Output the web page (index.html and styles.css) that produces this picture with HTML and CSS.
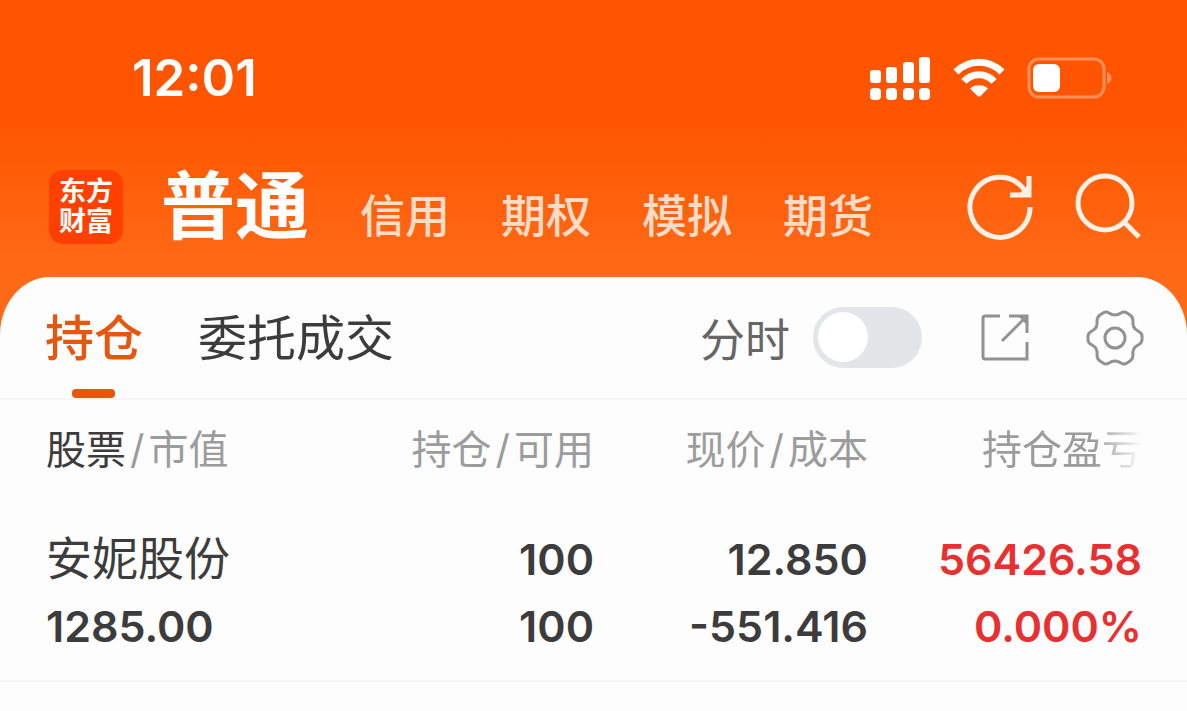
FILE: index.html
```html
<!DOCTYPE html>
<html lang="zh-CN">
<head>
  <meta charset="UTF-8">
  <meta name="viewport" content="width=device-width, initial-scale=1">
  <title>持仓</title>
  <link rel="stylesheet" href="styles.css">
</head>
<body>
  <header class="header">
    <div class="status-bar">
      <time class="clock">12:01</time>
      <div class="status-icons">
        <svg class="signal" width="62" height="44" viewBox="0 0 62 44" fill="#fff" aria-hidden="true">
          <rect x="1" y="14" width="11" height="13" rx="3"/>
          <rect x="17" y="11" width="11" height="16" rx="3"/>
          <rect x="34" y="6" width="11" height="21" rx="3"/>
          <rect x="50" y="1" width="11" height="26" rx="3"/>
          <rect x="1" y="32" width="11" height="12" rx="4"/>
          <rect x="17" y="32" width="11" height="12" rx="4"/>
          <rect x="34" y="32" width="11" height="12" rx="4"/>
          <rect x="50" y="32" width="11" height="12" rx="4"/>
        </svg>
        <svg class="wifi" width="52" height="40" viewBox="0 0 52 40" aria-hidden="true">
          <path d="M3 14C16 1 36 1 49 14" fill="none" stroke="#fff" stroke-width="7"/>
          <path d="M11 23.500C19 14.500 33 14.500 41 23.500" fill="none" stroke="#fff" stroke-width="7"/>
          <path d="M17 30.500C21 26 31 26 35 30.500L27.500 38Q26 39.500 24.500 38Z" fill="#fff"/>
        </svg>
        <svg class="battery" width="86" height="42" viewBox="0 0 86 42" aria-hidden="true">
          <rect x="2" y="2" width="75" height="38" rx="10" fill="none" stroke="#ff9059" stroke-width="3"/>
          <path d="M80 15C86 18 86 24 80 27Z" fill="#ff9059"/>
          <rect x="6" y="7" width="27" height="28" rx="6" fill="#fff"/>
        </svg>
      </div>
    </div>
    <div class="top-bar">
      <a class="logo" href="#"><span>东方</span><span>财富</span></a>
      <nav class="accounts">
        <a class="active" href="#">普通</a>
        <a href="#">信用</a>
        <a href="#">期权</a>
        <a href="#">模拟</a>
        <a href="#">期货</a>
      </nav>
      <div class="top-actions">
        <button type="button" aria-label="刷新">
          <svg width="68" height="68" viewBox="0 0 68 68" fill="none" stroke="#fff0e6" stroke-width="5">
            <path d="M63 34A30 30 0 1 1 56 15L62 22"/>
            <path d="M62 3V22H43"/>
            <path d="M51 22L62 11V22Z" fill="#fff0e6" stroke="none"/>
          </svg>
        </button>
        <button type="button" aria-label="搜索">
          <svg width="68" height="68" viewBox="0 0 68 68" fill="none" stroke="#fff0e6" stroke-width="5">
            <circle cx="30" cy="30" r="27"/>
            <path d="M49 49L64 64"/>
          </svg>
        </button>
      </div>
    </div>
  </header>

  <main class="card">
    <div class="tabs">
      <a class="tab active" href="#">持仓</a>
      <a class="tab" href="#">委托成交</a>
      <div class="tools">
        <label for="fenshi">分时</label>
        <input class="switch" type="checkbox" role="switch" id="fenshi">
        <button class="share" type="button" aria-label="分享">
          <svg width="50" height="50" viewBox="0 0 50 50" fill="none" stroke="#929292" stroke-width="3">
            <path d="M20 3H5Q3 3 3 5V44Q3 46 5 46H47V29"/>
            <path d="M29 3H47V20"/>
            <path d="M22 28L47 3"/>
            <path d="M38 3H47V12Z" fill="#929292" stroke="none"/>
          </svg>
        </button>
        <button class="settings" type="button" aria-label="设置">
          <svg width="58" height="58" viewBox="0 0 58 58" fill="none" stroke="#929292" stroke-width="3" stroke-linejoin="round">
            <path d="M17 4Q20 2 23 4Q29 8 35 4Q38 2 41 4L44 6Q47 8 47 12Q46 19 52 22Q56 24 56 27V31Q56 34 52 36Q46 39 47 46Q47 50 44 52L41 54Q38 56 35 54Q29 50 23 54Q20 56 17 54L14 52Q11 50 11 46Q12 39 6 36Q2 34 2 31V27Q2 24 6 22Q12 19 11 12Q11 8 14 6Z"/>
            <circle cx="29" cy="29" r="10"/>
          </svg>
        </button>
      </div>
    </div>

    <table class="positions">
      <thead>
        <tr>
          <th><span class="sorted">股票</span><span class="slash">/</span>市值</th>
          <th>持仓<span class="slash">/</span>可用</th>
          <th>现价<span class="slash">/</span>成本</th>
          <th><span class="fade">持仓盈亏</span></th>
        </tr>
      </thead>
      <tbody>
        <tr>
          <td><span class="name">安妮股份</span></td>
          <td>100</td>
          <td>12.850</td>
          <td class="up">56426.58</td>
        </tr>
        <tr>
          <td>1285.00</td>
          <td>100</td>
          <td>-551.416</td>
          <td class="up">0.000%</td>
        </tr>
      </tbody>
    </table>
  </main>
</body>
</html>
```

FILE: styles.css
```css
* { box-sizing: border-box; }
body { margin: 0; background: #fdfdfd; color: #3c3c3c; font-family: Inter, "Noto Sans CJK SC", sans-serif; }
a { color: inherit; text-decoration: none; }
button { display: block; padding: 0; border: 0; background: none; cursor: pointer; }
svg { display: block; }

/* header */
.header { padding-bottom: 60px; background: linear-gradient(#ff5500 0, #ff5500 110px, #ff6a16 270px); color: #fff; }
.status-bar { display: flex; justify-content: space-between; align-items: center; height: 156px; padding: 0 74px 0 132px; }
.clock { font-size: 51px; font-weight: 600; line-height: 56px; }
.status-icons { display: flex; align-items: center; gap: 22px; }
.top-bar { display: flex; align-items: center; height: 121px; padding: 0 44px 20px 49px; }
.logo { display: flex; flex-direction: column; justify-content: center; width: 74px; height: 74px; border-radius: 14px; background: #ff4000; font-size: 27px; font-weight: 700; line-height: 30px; text-align: center; }
.accounts { display: flex; align-items: baseline; gap: 51px; margin-left: 38px; padding-top: 10px; color: #ffdcc8; font-size: 45px; font-weight: 500; line-height: 80px; white-space: nowrap; }
.accounts .active { color: #fff; font-size: 74px; font-weight: 700; }
.top-actions { display: flex; gap: 40px; margin-left: auto; }

/* card */
.card { margin-top: -60px; border-radius: 50px 50px 0 0 / 58px 58px 0 0; background: #fdfdfd; }
.tabs { display: flex; align-items: stretch; gap: 55px; height: 123px; padding: 0 43px 0 45px; border-bottom: 2px solid #f5f5f5; }
.tab { position: relative; font-size: 49px; line-height: 124px; white-space: nowrap; }
.tab.active { color: #e6560c; font-weight: 500; }
.tab.active::after { content: ""; position: absolute; left: 50%; bottom: 0; width: 43px; height: 9px; margin-left: -22px; border-radius: 4px; background: #e6560c; }
.tools { display: flex; align-items: center; margin-left: auto; color: #666; font-size: 45px; }
.switch { appearance: none; display: flex; width: 109px; height: 61px; margin: 0 58px 0 23px; padding: 5px; border-radius: 31px; background: #e4e5e7; cursor: pointer; }
.switch::before { content: ""; width: 50px; height: 50px; border-radius: 50%; background: #fff; }
.switch:checked { justify-content: flex-end; background: #e6560c; }
.share { margin-right: 56px; }

/* positions */
.positions { width: 100%; padding: 0 45px 20px 46px; border-bottom: 2px solid #f5f5f5; border-spacing: 0; table-layout: fixed; }
.positions th, .positions td { padding: 0; text-align: right; white-space: nowrap; }
.positions th:first-child, .positions td:first-child { text-align: left; }
.positions th { height: 125px; padding-bottom: 31px; color: #9c9c9c; font-size: 40px; font-weight: 400; }
.positions td { height: 67px; font-size: 43px; font-weight: 600; line-height: 67px; }
.sorted { color: #3c3c3c; }
.slash { margin: 0 4px; }
.fade { -webkit-mask-image: linear-gradient(to right, #000 70%, transparent); mask-image: linear-gradient(to right, #000 70%, transparent); }
.name { font-size: 46px; font-weight: 400; }
.positions .up { color: #e93030; }
```
